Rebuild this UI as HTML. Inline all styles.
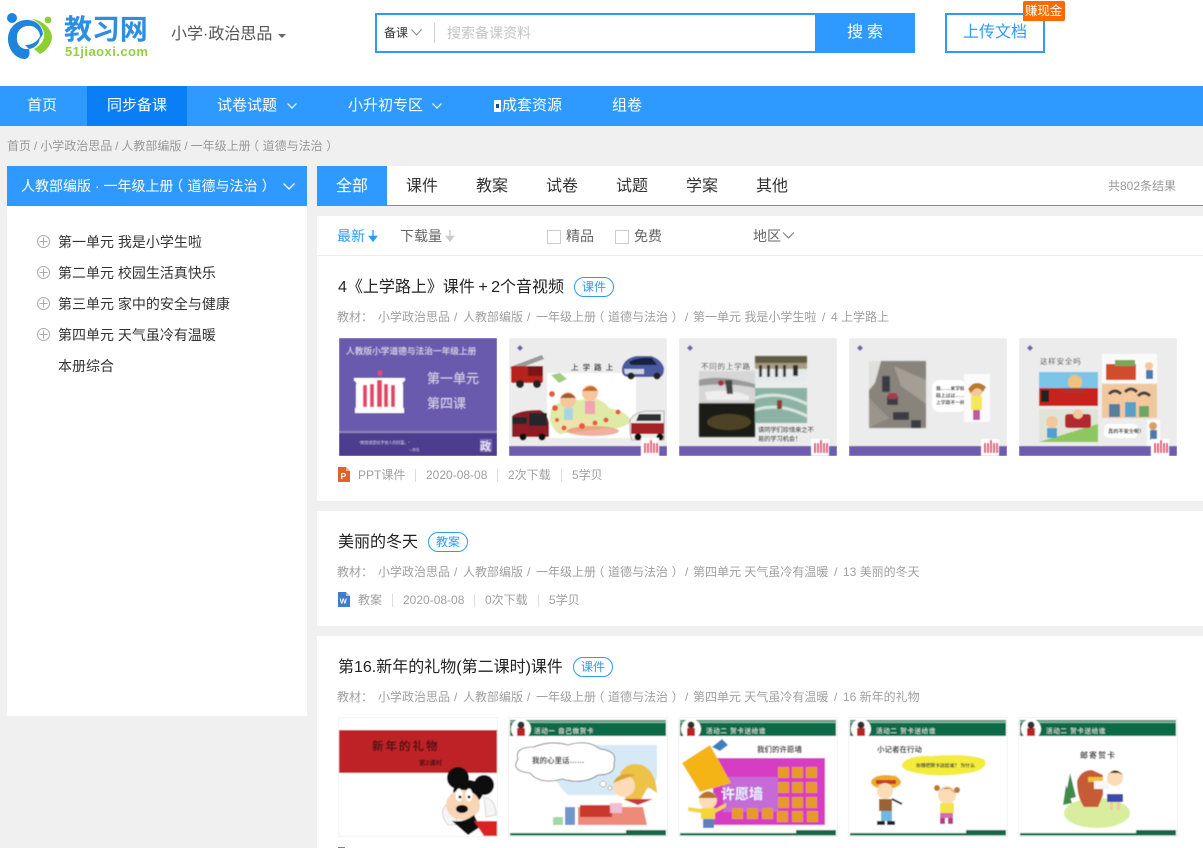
<!DOCTYPE html>
<html lang="zh"><head><meta charset="utf-8"><title>教习网</title>
<style>
html,body{margin:0;padding:0}
body{width:1203px;height:848px;overflow:hidden;position:relative;background:#f0f0f0;font-family:"Liberation Sans","Noto Sans CJK SC",sans-serif;color:#333}
.b{position:absolute}
.t{position:absolute;white-space:nowrap;line-height:20px;height:20px}
.g{color:#999;font-size:12px}
.m{color:#a0a0a0;font-size:12px}
.k{color:#333;font-size:14px}
.tab{font-size:16px;color:#333;top:177px}
.nav{font-size:15px;color:#fff;top:96px}
.ti{font-size:16px;color:#222}
.bd{position:absolute;border:1px solid #2e9aff;border-radius:10px;color:#2e9aff;font-size:12px;line-height:18px;height:18px;width:38px;text-align:center}
.sep{position:absolute;width:1px;height:13px;background:#ddd}
.o{position:relative;left:-.3em}
.c{position:relative;left:.3em}
svg{position:absolute;display:block;overflow:hidden}
svg text{font-family:"Liberation Sans","Noto Sans CJK SC",sans-serif}
</style></head><body>

<!-- header -->
<div class="b" style="left:0;top:0;width:1203px;height:86px;background:#fff"></div>
<svg style="left:5px;top:10px" width="50" height="52" viewBox="5 10 50 52">
<circle cx="12" cy="18" r="5" fill="#1f84dc"/>
<circle cx="48" cy="20" r="3.400" fill="#8ccf2f"/>
<path d="M32 19C42 20 52 28 52 38C51 45 46 51 40 54L34 49C41 45 45 40 44 33C43 27 38 22 32 19Z" fill="#8ccf2f"/>
<path d="M29 20C18 19 8 27 8 39C8 50 16 59 25 59C30 58 30 53 29 49C21 50 16 44 17 37C17 29 24 25 31 26C37 27 41 33 40 39L43 34C42 26 37 21 29 20Z" fill="#1f84dc"/>
<path d="M40 36C40 43 36 48 29 49L25 45C32 45 37 42 40 36Z" fill="#1f84dc"/>
</svg>
<div class="t" style="left:64px;top:19px;font-size:28px;font-weight:bold;color:#2d8fe3;line-height:22px;height:22px;letter-spacing:-.1px">教习网</div>
<div class="t" style="left:65px;top:44px;font-weight:bold;color:#92d03f;line-height:15px;height:15px;letter-spacing:.45px;font-size:13px">51jiaoxi.com</div>
<div class="t" style="left:171px;top:25px;font-size:16px;color:#555">小学·政治思品</div>
<div class="b" style="left:278px;top:34px;width:0;height:0;border:4px solid transparent;border-top:4px solid #666;border-bottom:0"></div>

<div class="b" style="left:375px;top:13px;width:438px;height:36px;border:2px solid #2e9aff;border-right:0;background:#fff"></div>
<div class="b" style="left:815px;top:13px;width:100px;height:40px;background:#2e9aff"></div>
<div class="t" style="left:384px;top:23px;font-size:12px;color:#333">备课</div>
<svg style="left:410px;top:28px" width="14" height="10"><path d="M1.500 1.500L6.500 7L11.500 1.500" fill="none" stroke="#888" stroke-width="1"/></svg>
<div class="b" style="left:434px;top:23px;width:1px;height:20px;background:#ccc"></div>
<div class="t" style="left:447px;top:23px;font-size:14px;color:#c4c4c4">搜索备课资料</div>
<div class="t" style="left:847px;top:23px;font-size:16px;color:#fff;letter-spacing:4px">搜索</div>
<div class="b" style="left:945px;top:13px;width:96px;height:36px;border:2px solid #2e9aff;background:#fff"></div>
<div class="t" style="left:963px;top:23px;font-size:16px;color:#2e9aff">上传文档</div>
<div class="b" style="left:1023px;top:1px;width:42px;height:20px;background:#ff6a00;border-radius:2px 2px 2px 0"></div>
<div class="t" style="left:1025px;top:1px;font-size:12.500px;color:#fff;letter-spacing:-.2px">赚现金</div>

<!-- nav -->
<div class="b" style="left:0;top:86px;width:1203px;height:40px;background:#2e9aff"></div>
<div class="b" style="left:87px;top:86px;width:100px;height:40px;background:#0a7ff5"></div>
<div class="t nav" style="left:27px">首页</div>
<div class="t nav" style="left:107px">同步备课</div>
<div class="t nav" style="left:217px">试卷试题</div>
<svg style="left:286px;top:102px" width="12" height="8"><path d="M1.500 1.500L6 6L10.500 1.500" fill="none" stroke="#fff" stroke-width="1.200"/></svg>
<div class="t nav" style="left:348px">小升初专区</div>
<svg style="left:431px;top:102px" width="12" height="8"><path d="M1.500 1.500L6 6L10.500 1.500" fill="none" stroke="#fff" stroke-width="1.200"/></svg>
<div class="b" style="left:494px;top:100px;width:7px;height:12px;background:#fff"></div>
<div class="b" style="left:496px;top:104px;width:3px;height:4px;background:#0d4f9a"></div>
<div class="t nav" style="left:502px">成套资源</div>
<div class="t nav" style="left:612px">组卷</div>

<div class="t g" style="left:7px;top:136px;word-spacing:-.4px">首页 / 小学政治思品 / 人教部编版 / 一年级上册<span class="o">（</span>道德与法治<span class="c">）</span></div>

<!-- sidebar -->
<div class="b" style="left:7px;top:166px;width:300px;height:40px;background:#2e9aff"></div>
<div class="t" style="left:21px;top:176px;font-size:14px;color:#fff">人教部编版 · 一年级上册<span class="o">（</span>道德与法治<span class="c">）</span></div>
<svg style="left:282px;top:182px" width="14" height="9"><path d="M1.500 1.500L7 7L12.500 1.500" fill="none" stroke="#fff" stroke-width="1.300"/></svg>
<div class="b" style="left:7px;top:206px;width:300px;height:510px;background:#fff"></div>
<svg style="left:36px;top:235px" width="16" height="110" fill="none" stroke="#aaa" stroke-width="1">
<g><circle cx="7.500" cy="6.500" r="6"/><path d="M3.500 6.500H11.500M7.500 2.500V10.500"/></g>
<g transform="translate(0,31)"><circle cx="7.500" cy="6.500" r="6"/><path d="M3.500 6.500H11.500M7.500 2.500V10.500"/></g>
<g transform="translate(0,62)"><circle cx="7.500" cy="6.500" r="6"/><path d="M3.500 6.500H11.500M7.500 2.500V10.500"/></g>
<g transform="translate(0,93)"><circle cx="7.500" cy="6.500" r="6"/><path d="M3.500 6.500H11.500M7.500 2.500V10.500"/></g>
</svg>
<div class="t k" style="left:58px;top:232px">第一单元 我是小学生啦</div>
<div class="t k" style="left:58px;top:263px">第二单元 校园生活真快乐</div>
<div class="t k" style="left:58px;top:294px">第三单元 家中的安全与健康</div>
<div class="t k" style="left:58px;top:325px">第四单元 天气虽冷有温暖</div>
<div class="t k" style="left:58px;top:356px">本册综合</div>

<!-- tabs -->
<div class="b" style="left:317px;top:166px;width:886px;height:39px;background:#fff"></div>
<div class="b" style="left:317px;top:205px;width:886px;height:1px;background:#8a8a8a"></div>
<div class="b" style="left:317px;top:166px;width:70px;height:39px;background:#2e9aff"></div>
<div class="b" style="left:317px;top:205px;width:70px;height:1px;background:#2e9aff"></div>
<div class="t tab" style="left:336px;color:#fff">全部</div>
<div class="t tab" style="left:406px">课件</div>
<div class="t tab" style="left:476px">教案</div>
<div class="t tab" style="left:546px">试卷</div>
<div class="t tab" style="left:616px">试题</div>
<div class="t tab" style="left:686px">学案</div>
<div class="t tab" style="left:756px">其他</div>
<div class="t g" style="left:1108px;top:176px">共802条结果</div>

<!-- filter -->
<div class="b" style="left:317px;top:216px;width:886px;height:39px;background:#fff"></div>
<div class="b" style="left:317px;top:255px;width:886px;height:1px;background:#eee"></div>
<div class="t" style="left:337px;top:226px;font-size:14px;color:#2e9aff">最新</div>
<svg style="left:368px;top:229px" width="10" height="14"><path d="M5 1V11M1.500 7.500L5 12L8.500 7.500Z" fill="#2e9aff" stroke="#2e9aff" stroke-width="1.400"/></svg>
<div class="t" style="left:400px;top:226px;font-size:14px;color:#666">下载量</div>
<svg style="left:445px;top:229px" width="10" height="14"><path d="M5 1V11M1.500 7.500L5 12L8.500 7.500Z" fill="#ccc" stroke="#ccc" stroke-width="1.400"/></svg>
<div class="b" style="left:547px;top:230px;width:12px;height:12px;border:1px solid #ccc"></div>
<div class="t" style="left:566px;top:226px;font-size:14px;color:#666">精品</div>
<div class="b" style="left:615px;top:230px;width:12px;height:12px;border:1px solid #ccc"></div>
<div class="t" style="left:634px;top:226px;font-size:14px;color:#666">免费</div>
<div class="t" style="left:753px;top:226px;font-size:14px;color:#666">地区</div>
<svg style="left:782px;top:231px" width="13" height="9"><path d="M1 1.500L6.500 7L12 1.500" fill="none" stroke="#777" stroke-width="1"/></svg>

<!-- card 1 -->
<div class="b" style="left:317px;top:256px;width:886px;height:245px;background:#fff"></div>
<div class="t ti" style="left:338px;top:278px;word-spacing:-1px">4《上学路上》课件 + 2个音视频</div>
<div class="bd" style="left:574px;top:277px">课件</div>
<div class="t m" style="left:337px;top:307px">教材：</div>
<div class="t m" style="left:378px;top:307px">小学政治思品</div>
<div class="t m" style="left:454px;top:307px">/</div>
<div class="t m" style="left:463px;top:307px">人教部编版</div>
<div class="t m" style="left:527px;top:307px">/</div>
<div class="t m" style="left:536px;top:307px">一年级上册<span class="o">（</span>道德与法治<span class="c">）</span></div>
<div class="t m" style="left:685px;top:307px">/</div>
<div class="t m" style="left:693px;top:307px">第一单元 我是小学生啦</div>
<div class="t m" style="left:822px;top:307px">/</div>
<div class="t m" style="left:831px;top:307px">4 上学路上</div>

<svg style="left:339px;top:338px" width="158" height="118" viewBox="0 0 158 118">
<defs>
<filter id="bl" x="-5%" y="-5%" width="110%" height="110%"><feGaussianBlur stdDeviation=".55"/></filter>
<filter id="bp" x="-5%" y="-5%" width="110%" height="110%"><feGaussianBlur stdDeviation=".9"/></filter>
</defs>
<g filter="url(#bl)">
<rect width="158" height="118" fill="#6a5aae"/>
<rect y="95" width="158" height="23" fill="#4d3c8e"/><rect y="93" width="158" height="2" fill="#8d84bd"/>
<text x="7" y="16" font-size="8.700" fill="#e4e0f2" font-family="Noto Serif CJK SC">人教版小学道德与法治一年级上册</text>
<circle cx="41" cy="35" r="2.500" fill="#e44d6a"/>
<rect x="15" y="40" width="51" height="3" fill="#fff"/><path d="M16 43H65L63 46H18Z" fill="#fff"/>
<rect x="17" y="46" width="47" height="25" fill="#fff"/>
<rect x="16" y="70" width="49" height="5" fill="#fff"/>
<g fill="#e0476a"><rect x="24" y="47" width="4" height="22"/><rect x="31" y="46" width="4" height="23"/><rect x="38" y="42" width="5" height="27"/><rect x="45" y="46" width="4" height="23"/><rect x="52" y="47" width="4" height="22"/></g>
<text x="88" y="45" font-size="13" fill="#d8d4ec" font-family="Noto Serif CJK SC">第一单元</text>
<text x="88" y="70" font-size="13" fill="#d8d4ec" font-family="Noto Serif CJK SC">第四课</text>
<text x="20" y="106" font-size="4" fill="#cfc8e6">“教育就是给予他人的财富。”</text>
<text x="70" y="113" font-size="3.500" fill="#cfc8e6">—佚名</text>
<rect x="141" y="101" width="12" height="13" fill="#7a6cba"/>
<text x="141" y="112" font-size="11" font-weight="bold" fill="#e8e4f4">政</text>
</g></svg>

<svg style="left:509px;top:338px" width="158" height="118" viewBox="0 0 158 118">
<g filter="url(#bl)">
<rect width="158" height="118" fill="#ececec"/>
<rect y="108" width="158" height="10" fill="#6e5cb0"/>
<path d="M11 7l3 3-3 3-3-3z" fill="#6e5cb0"/>
<rect x="38" y="35" width="89" height="65" fill="#fff"/>
<text x="62" y="32" font-size="7.500" font-weight="bold" fill="#222" letter-spacing="1">上 学 路 上</text>
<path d="M1 29L33 17L35 21L3 33Z" fill="#999"/><rect x="2" y="28" width="32" height="17" rx="2" fill="#b8201f"/><path d="M19 28H34V38H19Z" fill="#7c1512"/><circle cx="11" cy="46" r="4" fill="#222"/><circle cx="28" cy="46" r="4" fill="#222"/>
<path d="M113 30Q115 20 128 18L142 18Q152 21 155 30Q155 39 150 39H118Q112 38 113 30Z" fill="#4a5aa0"/><path d="M120 24Q128 19 143 20L148 27H122Z" fill="#182040"/><path d="M115 31H135V36H116Z" fill="#cfd3e6"/><circle cx="122" cy="38" r="3.500" fill="#222"/><circle cx="148" cy="38" r="3.500" fill="#222"/>
<path d="M42 72Q50 60 72 62Q90 56 100 70Q120 74 122 84Q112 92 100 90L50 96Q38 86 42 72Z" fill="#dfeaa6"/>
<path d="M44 86Q70 74 88 86Q78 94 50 94Z" fill="#efe2ac"/>
<ellipse cx="84" cy="93" rx="26" ry="5" fill="#e97b62" opacity=".6"/>
<circle cx="59" cy="62" r="8" fill="#f5c89c"/><path d="M51 60Q59 50 67 60Z" fill="#9e5b2c"/>
<circle cx="81" cy="55" r="8" fill="#f5c89c"/><path d="M73 53Q83 43 89 53Z" fill="#cc6b2f"/>
<rect x="55" y="70" width="9" height="12" fill="#a9d4e4"/><rect x="76" y="63" width="10" height="13" fill="#f3a1b4"/>
<path d="M42 37l9-2 7 6-8 4z" fill="#9fce7e"/>
<g fill="#e65a3a"><circle cx="43" cy="56" r="3"/><circle cx="46" cy="70" r="3"/><circle cx="97" cy="82" r="2.500"/><circle cx="109" cy="74" r="2.500"/><circle cx="73" cy="88" r="3"/><circle cx="86" cy="85" r="2.500"/><circle cx="55" cy="90" r="2.500"/><circle cx="48" cy="82" r="2"/></g>
<path d="M3 84V78Q10 72 31 72Q38 75 40 85V99H3Z" fill="#8e1a20"/><path d="M20 75H38V88H20Z" fill="#28282c"/><path d="M3 79H18V86H3Z" fill="#28282c"/><circle cx="14" cy="99" r="3.500" fill="#111"/><circle cx="33" cy="99" r="3.500" fill="#111"/>
<path d="M121 82Q126 73 140 73H155V102H123Q120 95 121 82Z" fill="#eee" stroke="#777" stroke-width=".6"/><path d="M122 85H155V96H122Z" fill="#a52428"/><path d="M130 76H152V83H127Z" fill="#333"/><circle cx="129" cy="99" r="3.500" fill="#111"/><circle cx="151" cy="99" r="3.500" fill="#111"/>
<rect x="132" y="100" width="18" height="18" fill="#fff"/>
<g fill="#e0476a"><rect x="135" y="105" width="2" height="10"/><rect x="138" y="105" width="2" height="10"/><rect x="141" y="102" width="2" height="13"/><rect x="144" y="105" width="2" height="10"/><rect x="147" y="105" width="2" height="10"/></g>
</g></svg>

<svg style="left:679px;top:338px" width="158" height="118" viewBox="0 0 158 118">
<g filter="url(#bl)">
<rect width="158" height="118" fill="#ececec"/>
<rect y="108" width="158" height="10" fill="#6e5cb0"/>
<path d="M11 7l3 3-3 3-3-3z" fill="#6e5cb0"/>
<text x="22" y="31" font-size="7.500" fill="#333" letter-spacing=".8">不同的上学路</text>
</g>
<g filter="url(#bp)">
<rect x="20" y="33" width="56" height="32" fill="#d6d6d6"/><path d="M20 42Q40 36 76 46V50Q50 44 20 48Z" fill="#9a9a9a"/><path d="M26 54Q50 50 70 58L70 62L28 62Z" fill="#eee"/><path d="M46 42H53L54 56H48Z" fill="#444"/><circle cx="42" cy="45" r="3" fill="#a03040"/>
<rect x="76" y="18" width="52" height="26" fill="#a89b80"/><rect x="76" y="18" width="52" height="7" fill="#5f5a44"/><rect x="76" y="31" width="52" height="13" fill="#e6eaec"/><path d="M80 27h3v12h-3zM88 27h3v12h-3zM96 27h3v12h-3zM104 27h3v12h-3zM114 27h5v11h-5z" fill="#2c2c2c"/>
<rect x="76" y="50" width="52" height="35" fill="#8cb2a6"/><path d="M76 60Q100 52 128 66M76 72Q100 64 128 78" stroke="#d8e6df" stroke-width="3" fill="none"/><rect x="98" y="62" width="5" height="9" fill="#8c3a2c"/>
<rect x="20" y="65" width="56" height="34" fill="#1e1a12"/><ellipse cx="50" cy="84" rx="22" ry="8" fill="#4e4226"/>
</g>
<g filter="url(#bl)">
<text x="79" y="94" font-size="6.200" fill="#333">请同学们珍惜来之不</text>
<text x="79" y="103" font-size="6.200" fill="#333">易的学习机会！</text>
<rect x="132" y="101" width="18" height="17" fill="#fff"/>
<g fill="#e0476a"><rect x="135" y="105" width="2" height="10"/><rect x="138" y="105" width="2" height="10"/><rect x="141" y="102" width="2" height="13"/><rect x="144" y="105" width="2" height="10"/><rect x="147" y="105" width="2" height="10"/></g>
</g></svg>

<svg style="left:849px;top:338px" width="158" height="118" viewBox="0 0 158 118">
<g filter="url(#bl)">
<rect width="158" height="118" fill="#ececec"/>
<rect y="108" width="158" height="10" fill="#6e5cb0"/>
<path d="M11 7l3 3-3 3-3-3z" fill="#6e5cb0"/>
</g>
<g filter="url(#bp)">
<rect x="20" y="23" width="57" height="67" fill="#88847c"/>
<path d="M20 23H32L26 45L20 52Z" fill="#dfe0dc"/><path d="M45 28L77 42V66L52 48Z" fill="#a49e94"/><path d="M20 60L40 80L20 90Z" fill="#9a958c"/>
<path d="M33 38h8v16h-8zM38 58h11v9H38zM44 74h16v8H44zM62 82h10v8H62z" fill="#3a3a44"/><path d="M39 55h9v6h-9z" fill="#a33e4a"/>
</g>
<g filter="url(#bl)">
<rect x="83" y="42" width="34" height="32" rx="7" fill="#fff"/>
<text x="87" y="52" font-size="4.800" font-weight="bold" fill="#222">我……来学校,</text>
<text x="87" y="59" font-size="4.800" font-weight="bold" fill="#222">路上过过……</text>
<text x="87" y="66" font-size="4.800" font-weight="bold" fill="#222">上学路不一样</text>
<rect x="115" y="36" width="26" height="48" fill="#fbfbfb"/>
<circle cx="127" cy="52" r="7" fill="#f5c89c"/><path d="M119 51Q127 40 137 49L134 54Q128 46 122 55Z" fill="#b87a2a"/><rect x="122" y="58" width="11" height="14" fill="#f3e75a"/><rect x="124" y="72" width="7" height="10" fill="#c05a9e"/>
<rect x="132" y="101" width="18" height="17" fill="#fff"/>
<g fill="#e0476a"><rect x="135" y="105" width="2" height="10"/><rect x="138" y="105" width="2" height="10"/><rect x="141" y="102" width="2" height="13"/><rect x="144" y="105" width="2" height="10"/><rect x="147" y="105" width="2" height="10"/></g>
</g></svg>

<svg style="left:1019px;top:338px" width="158" height="118" viewBox="0 0 158 118">
<g filter="url(#bl)">
<rect width="158" height="118" fill="#ececec"/>
<rect y="108" width="158" height="10" fill="#6e5cb0"/>
<path d="M11 7l3 3-3 3-3-3z" fill="#6e5cb0"/>
<text x="21" y="26" font-size="7.500" fill="#333" letter-spacing=".8">这样安全吗</text>
<rect x="20" y="34" width="59" height="34" fill="#7dc5e6"/><rect x="20" y="50" width="59" height="18" fill="#c8201e"/><rect x="22" y="52" width="8" height="12" fill="#222"/><circle cx="56" cy="44" r="7" fill="#eec17c"/><rect x="42" y="50" width="24" height="5" fill="#a33"/>
<rect x="20" y="71" width="59" height="33" fill="#e0e4d8"/><path d="M20 104L79 86V104Z" fill="#8ec75e"/><rect x="46" y="76" width="26" height="14" rx="3" fill="#b32a2f"/><circle cx="33" cy="84" r="6" fill="#f5c89c"/><rect x="28" y="90" width="10" height="10" fill="#4fa0d0"/><circle cx="59" cy="76" r="5" fill="#f5c89c"/>
<rect x="83" y="16" width="55" height="29" fill="#fafafa"/><rect x="87" y="26" width="30" height="16" fill="#d24b2c"/><rect x="96" y="22" width="20" height="6" fill="#7aa65a"/><circle cx="130" cy="28" r="4" fill="#f5c89c"/><rect x="127" y="32" width="7" height="9" fill="#4c7ab0"/>
<rect x="83" y="46" width="55" height="34" fill="#f1c79e"/><circle cx="96" cy="60" r="6" fill="#f5c89c"/><circle cx="112" cy="58" r="6" fill="#f5c89c"/><circle cx="125" cy="62" r="6" fill="#f5c89c"/><path d="M90 56Q96 50 102 56M106 54Q112 48 118 54M119 58Q125 52 131 58" stroke="#444" stroke-width="3" fill="none"/><rect x="90" y="66" width="11" height="13" fill="#5a7ca0"/><rect x="106" y="64" width="11" height="15" fill="#58a0c8"/><rect x="120" y="68" width="10" height="11" fill="#6aa868"/>
<rect x="85" y="86" width="34" height="14" rx="5" fill="#fff"/>
<text x="89" y="95" font-size="5.200" font-weight="bold" fill="#222">真的不安全呢！</text>
<rect x="128" y="82" width="13" height="26" fill="#fbfbfb"/><circle cx="134" cy="88" r="4" fill="#d9a066"/><rect x="131" y="92" width="7" height="10" fill="#4c7ab0"/>
<rect x="132" y="101" width="18" height="17" fill="#fff"/>
<g fill="#e0476a"><rect x="135" y="105" width="2" height="10"/><rect x="138" y="105" width="2" height="10"/><rect x="141" y="102" width="2" height="13"/><rect x="144" y="105" width="2" height="10"/><rect x="147" y="105" width="2" height="10"/></g>
</g></svg>

<svg style="left:338px;top:467px" width="12" height="15" viewBox="0 0 12 15"><path d="M0 0H8L12 4V15H0Z" fill="#e0622d"/><path d="M8 0L12 4H8Z" fill="#f3b193"/><text x="2.500" y="12" font-size="8.500" font-weight="bold" fill="#fff" font-family="Liberation Sans">P</text></svg>
<div class="t m" style="left:358px;top:465px">PPT课件</div><div class="sep" style="left:415px;top:469px"></div>
<div class="t m" style="left:426px;top:465px">2020-08-08</div><div class="sep" style="left:497px;top:469px"></div>
<div class="t m" style="left:508px;top:465px">2次下载</div><div class="sep" style="left:561px;top:469px"></div>
<div class="t m" style="left:572px;top:465px">5学贝</div>

<!-- card 2 -->
<div class="b" style="left:317px;top:511px;width:886px;height:115px;background:#fff"></div>
<div class="t ti" style="left:338px;top:533px">美丽的冬天</div>
<div class="bd" style="left:428px;top:532px">教案</div>
<div class="t m" style="left:337px;top:562px">教材：</div>
<div class="t m" style="left:378px;top:562px">小学政治思品</div>
<div class="t m" style="left:454px;top:562px">/</div>
<div class="t m" style="left:463px;top:562px">人教部编版</div>
<div class="t m" style="left:527px;top:562px">/</div>
<div class="t m" style="left:536px;top:562px">一年级上册<span class="o">（</span>道德与法治<span class="c">）</span></div>
<div class="t m" style="left:685px;top:562px">/</div>
<div class="t m" style="left:693px;top:562px">第四单元 天气虽冷有温暖</div>
<div class="t m" style="left:834px;top:562px">/</div>
<div class="t m" style="left:843px;top:562px">13 美丽的冬天</div>
<svg style="left:338px;top:592px" width="12" height="15" viewBox="0 0 12 15"><path d="M0 0H8L12 4V15H0Z" fill="#3f7ccb"/><path d="M8 0L12 4H8Z" fill="#a6c4ea"/><text x="1.800" y="11.500" font-size="7.500" font-weight="bold" fill="#fff" font-family="Liberation Sans">W</text></svg>
<div class="t m" style="left:358px;top:590px">教案</div><div class="sep" style="left:392px;top:594px"></div>
<div class="t m" style="left:403px;top:590px">2020-08-08</div><div class="sep" style="left:474px;top:594px"></div>
<div class="t m" style="left:485px;top:590px">0次下载</div><div class="sep" style="left:538px;top:594px"></div>
<div class="t m" style="left:549px;top:590px">5学贝</div>

<!-- card 3 -->
<div class="b" style="left:317px;top:636px;width:886px;height:212px;background:#fff"></div>
<div class="t ti" style="left:338px;top:658px">第16.新年的礼物(第二课时)课件</div>
<div class="bd" style="left:573px;top:657px">课件</div>
<div class="t m" style="left:337px;top:687px">教材：</div>
<div class="t m" style="left:378px;top:687px">小学政治思品</div>
<div class="t m" style="left:454px;top:687px">/</div>
<div class="t m" style="left:463px;top:687px">人教部编版</div>
<div class="t m" style="left:527px;top:687px">/</div>
<div class="t m" style="left:536px;top:687px">一年级上册<span class="o">（</span>道德与法治<span class="c">）</span></div>
<div class="t m" style="left:685px;top:687px">/</div>
<div class="t m" style="left:693px;top:687px">第四单元 天气虽冷有温暖</div>
<div class="t m" style="left:834px;top:687px">/</div>
<div class="t m" style="left:843px;top:687px">16 新年的礼物</div>

<svg style="left:338px;top:717px" width="160" height="120" viewBox="0 0 160 120">
<g filter="url(#bl)">
<rect x=".5" y=".5" width="159" height="119" fill="#fff" stroke="#eee"/>
<rect x="1" y="13" width="158" height="43" fill="#bf2025"/>
<text x="34" y="33" font-size="11.500" font-weight="bold" fill="#4a1214" letter-spacing="2" font-family="Noto Serif CJK SC">新年的礼物</text>
<text x="81" y="48" font-size="6.500" font-weight="bold" fill="#4a1214">第2课时</text>
<circle cx="120" cy="61" r="11" fill="#111"/><circle cx="146" cy="68" r="10" fill="#111"/>
<path d="M108 88Q100 96 110 108L120 108L114 88Z" fill="#f5f5f5" stroke="#bbb" stroke-width=".6"/>
<path d="M146 80Q158 82 158 98L148 100Z" fill="#f5f5f5" stroke="#bbb" stroke-width=".6"/>
<ellipse cx="130" cy="75" rx="15" ry="12" fill="#111"/>
<ellipse cx="125" cy="88" rx="17" ry="15" fill="#f7d5b5"/>
<ellipse cx="124" cy="92" rx="6" ry="4" fill="#111"/><ellipse cx="121" cy="78" rx="3.500" ry="6.500" fill="#fff"/><ellipse cx="131" cy="78" rx="3.500" ry="6.500" fill="#fff"/><circle cx="122" cy="80" r="1.500" fill="#111"/><circle cx="131" cy="80" r="1.500" fill="#111"/>
<path d="M114 104Q126 106 136 98L142 110L130 118Z" fill="#111"/><path d="M136 104H159V119H146Z" fill="#d22"/>
</g></svg>

<svg style="left:508px;top:717px" width="160" height="120" viewBox="0 0 160 120">
<g filter="url(#bl)">
<rect x=".5" y=".5" width="159" height="119" fill="#fff" stroke="#eee"/>
<path d="M42 28H149V60Q148 76 110 78H60Q50 70 42 50Z" fill="#d6e9f7"/>
<rect x="2" y="3" width="156" height="16" fill="#0a6a48"/><rect x="2" y="4" width="156" height="2" fill="#7cb79c"/>
<circle cx="13" cy="12" r="10" fill="#fff"/><rect x="9" y="11" width="8" height="8" fill="#b22"/><circle cx="13" cy="8" r="3.500" fill="#333"/>
<text x="26" y="16" font-size="6.500" fill="#e8f4ee" letter-spacing=".7">活动一 自己做贺卡</text>
<path d="M10 42Q6 30 26 30Q42 23 60 28Q80 22 92 32Q110 34 106 46Q108 58 90 58Q76 68 54 62Q32 68 22 56Q2 54 10 42Z" fill="#fff" stroke="#666" stroke-width=".8"/>
<text x="24" y="46" font-size="7.500" font-weight="bold" fill="#333" font-family="Noto Serif CJK SC">我的心里话……</text>
<circle cx="95" cy="67" r="3" fill="#fff" stroke="#666" stroke-width=".5"/><circle cx="102" cy="71" r="2" fill="#fff" stroke="#666" stroke-width=".5"/>
<path d="M112 56Q120 44 134 48Q148 54 149 76L140 70L132 84H118Z" fill="#ecc248"/>
<circle cx="116" cy="69" r="11" fill="#fbdcb6"/><path d="M105 66Q110 54 128 58L118 61Z" fill="#d9a62f"/>
<path d="M115 82H145L130 88Z" fill="#c63a3a"/>
<path d="M70 90H135L139 108H70Z" fill="#ee8a7a"/><rect x="72" y="88" width="32" height="12" fill="#c9382b"/>
<rect x="102" y="86" width="12" height="10" fill="#f3bcd0"/>
<rect x="57" y="90" width="10" height="18" fill="#6f97cc"/><rect x="45" y="100" width="10" height="8" fill="#a4d6a6"/>
<rect x="2" y="116" width="156" height="2.500" fill="#0a6a48"/><rect x="118" y="113" width="40" height="5" fill="#0a6a48"/>
</g></svg>

<svg style="left:678px;top:717px" width="160" height="120" viewBox="0 0 160 120">
<g filter="url(#bl)">
<rect x=".5" y=".5" width="159" height="119" fill="#fff" stroke="#eee"/>
<rect x="2" y="3" width="156" height="16" fill="#0a6a48"/><rect x="2" y="4" width="156" height="2" fill="#7cb79c"/>
<circle cx="13" cy="12" r="10" fill="#fff"/><rect x="9" y="11" width="8" height="8" fill="#b22"/><circle cx="13" cy="8" r="3.500" fill="#333"/>
<text x="28" y="16" font-size="6.500" fill="#e8f4ee" letter-spacing=".7">活动二 贺卡送给谁</text>
<text x="79" y="35" font-size="7.500" font-weight="bold" fill="#333" font-family="Noto Serif CJK SC">我们的许愿墙</text>
<rect x="35" y="41" width="112" height="67" fill="#d73ec2"/><rect x="45" y="60" width="55" height="35" fill="#c56ad6"/>
<path d="M4 46L32 28L53 66L22 75Z" fill="#f5b414"/>
<path d="M34 30L44 22L50 28L42 34Z" fill="#3a80c0"/>
<text x="43" y="82" font-size="14" font-weight="bold" fill="#e6f3fc">许愿墙</text>
<g fill="#e79a2a"><rect x="100" y="50" width="11" height="11"/><rect x="114" y="50" width="11" height="11"/><rect x="128" y="50" width="11" height="11"/><rect x="100" y="65" width="11" height="11"/><rect x="114" y="65" width="11" height="11"/><rect x="128" y="65" width="11" height="11"/><rect x="100" y="80" width="11" height="11"/><rect x="114" y="80" width="11" height="11"/><rect x="128" y="80" width="11" height="11"/><rect x="54" y="91" width="11" height="11"/><rect x="69" y="91" width="11" height="11"/><rect x="84" y="91" width="11" height="11"/><rect x="99" y="94" width="11" height="11"/><rect x="114" y="94" width="11" height="11"/><rect x="129" y="94" width="11" height="11"/></g>
<circle cx="30" cy="83" r="9" fill="#fbdcb6"/><path d="M20 81Q30 68 40 81Z" fill="#b5742c"/><rect x="23" y="91" width="14" height="11" fill="#f4d63a"/><path d="M10 90L23 92V96L10 94ZM37 92L48 86V90L37 96Z" fill="#f4d63a"/><rect x="25" y="102" width="11" height="9" fill="#5e7fc4"/>
<rect x="2" y="116" width="156" height="2.500" fill="#0a6a48"/><rect x="118" y="113" width="40" height="5" fill="#0a6a48"/>
</g></svg>

<svg style="left:848px;top:717px" width="160" height="120" viewBox="0 0 160 120">
<g filter="url(#bl)">
<rect x=".5" y=".5" width="159" height="119" fill="#fff" stroke="#eee"/>
<rect x="2" y="3" width="156" height="16" fill="#0a6a48"/><rect x="2" y="4" width="156" height="2" fill="#7cb79c"/>
<circle cx="13" cy="12" r="10" fill="#fff"/><rect x="9" y="11" width="8" height="8" fill="#b22"/><circle cx="13" cy="8" r="3.500" fill="#333"/>
<text x="28" y="16" font-size="6.500" fill="#e8f4ee" letter-spacing=".7">活动二 贺卡送给谁</text>
<text x="29" y="35" font-size="7.500" font-weight="bold" fill="#333" font-family="Noto Serif CJK SC">小记者在行动</text>
<path d="M54 47Q60 38 84 39Q118 36 136 42Q142 50 126 55Q90 62 64 55Q52 52 54 47Z" fill="#f3ec3a"/>
<text x="68" y="50" font-size="4.800" font-weight="bold" fill="#444">你想把贺卡送给谁？ 为什么</text>
<circle cx="47" cy="60" r="2" fill="#eee67a"/><circle cx="40" cy="63" r="1.500" fill="#eee67a"/>
<ellipse cx="38" cy="65" rx="15" ry="7" fill="#ecab2a"/><path d="M28 63H48V67H28Z" fill="#c63a2a"/>
<circle cx="37" cy="74" r="8" fill="#fbdcb6"/>
<rect x="31" y="82" width="13" height="12" fill="#9a6236"/>
<path d="M44 82L54 87" stroke="#222" stroke-width="2"/><rect x="33" y="94" width="11" height="10" fill="#70b8e4"/><rect x="29" y="104" width="8" height="4" fill="#222"/><rect x="39" y="104" width="8" height="4" fill="#222"/>
<circle cx="99" cy="78" r="9" fill="#fbdcb6"/><path d="M90 77Q99 64 108 77L102 72H94Z" fill="#b97a2a"/><circle cx="89" cy="71" r="3" fill="#b97a2a"/><circle cx="109" cy="73" r="3" fill="#b97a2a"/><rect x="92" y="86" width="14" height="10" fill="#f4e24a"/><rect x="92" y="96" width="13" height="5" fill="#d56aac"/><rect x="92" y="101" width="5" height="6" fill="#b24080"/><rect x="100" y="101" width="5" height="6" fill="#b24080"/>
<rect x="2" y="116" width="156" height="2.500" fill="#0a6a48"/><rect x="118" y="113" width="40" height="5" fill="#0a6a48"/>
</g></svg>

<svg style="left:1018px;top:717px" width="160" height="120" viewBox="0 0 160 120">
<g filter="url(#bl)">
<rect x=".5" y=".5" width="159" height="119" fill="#fff" stroke="#eee"/>
<rect x="2" y="3" width="156" height="16" fill="#0a6a48"/><rect x="2" y="4" width="156" height="2" fill="#7cb79c"/>
<circle cx="13" cy="12" r="10" fill="#fff"/><rect x="9" y="11" width="8" height="8" fill="#b22"/><circle cx="13" cy="8" r="3.500" fill="#333"/>
<text x="28" y="16" font-size="6.500" fill="#e8f4ee" letter-spacing=".7">活动二 贺卡送给谁</text>
<text x="62" y="41" font-size="8" font-weight="bold" fill="#333" letter-spacing="1" font-family="Noto Serif CJK SC">邮寄贺卡</text>
<ellipse cx="79" cy="96" rx="33" ry="15" fill="#d8ee9e"/>
<path d="M52 56L58 80L47 83ZM48 68L54 86L45 88Z" fill="#3f8a48"/>
<path d="M59 64Q63 53 74 53L85 58V78L80 90H66Q59 80 59 64Z" fill="#c65c36"/><rect x="70" y="60" width="15" height="5" fill="#f0c040"/><rect x="76" y="64" width="15" height="8" fill="#f6f6f6"/>
<circle cx="97" cy="61" r="8" fill="#fbdcb6"/><path d="M90 58Q97 49 105 58L101 56H92Z" fill="#4a2e1c"/><rect x="91" y="69" width="12" height="8" fill="#fff"/><rect x="89" y="77" width="16" height="8" fill="#3a4aa8"/><rect x="92" y="85" width="3" height="8" fill="#f3c897"/><rect x="99" y="85" width="3" height="8" fill="#f3c897"/>
<rect x="2" y="116" width="156" height="2.500" fill="#0a6a48"/><rect x="118" y="113" width="40" height="5" fill="#0a6a48"/>
</g></svg>

<div class="b" style="left:338px;top:847px;width:7px;height:1px;background:#e0622d"></div>
</body></html>
